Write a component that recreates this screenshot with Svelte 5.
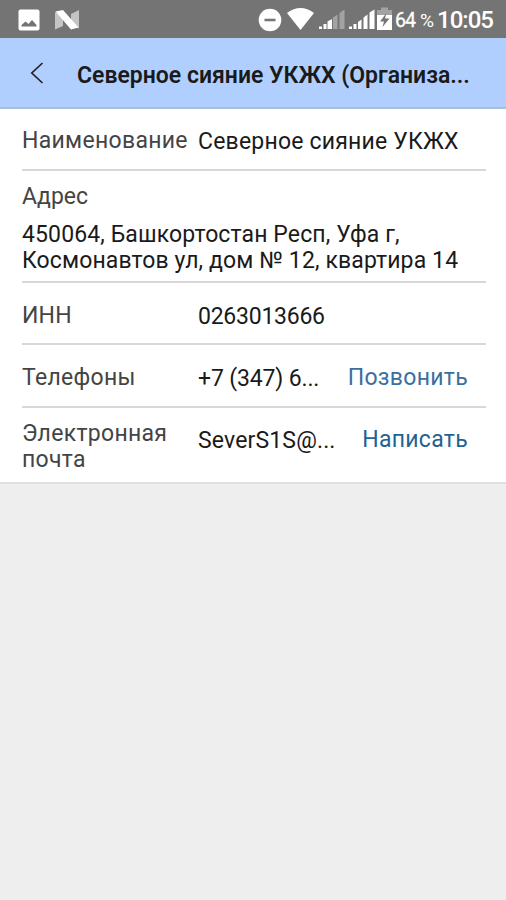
<script lang="ts">
  type Row = {
    kind: string;
    label: string;
    value: string;
    action?: string;
  };

  let title = 'Северное сияние УКЖХ (Организа...';

  let rows: Row[] = [
    { kind: 'name', label: 'Наименование', value: 'Северное сияние УКЖХ' },
    { kind: 'address', label: 'Адрес', value: '450064, Башкортостан Респ, Уфа г,\nКосмонавтов ул, дом № 12, квартира 14' },
    { kind: 'inn', label: 'ИНН', value: '0263013666' },
    { kind: 'phone', label: 'Телефоны', value: '+7 (347) 6...', action: 'Позвонить' },
    { kind: 'email', label: 'Электронная\nпочта', value: 'SeverS1S@...', action: 'Написать' }
  ];
</script>

<div class="screen">
  <div class="status-bar">
    <svg width="506" height="38" viewBox="0 0 506 38" aria-hidden="true">
      <!-- картинка -->
      <rect x="18.5" y="9.5" width="21" height="21" rx="2" fill="#fff" />
      <path d="M21.5 26.5 V25 L25.5 21.5 L28.5 24 L32 20 L36.5 25 V26.5 Z" fill="#747474" />
      <!-- Android N -->
      <path d="M55 12 L63 16 L63 26 L55 29.5 Z M79 10 L71 14 L71 24 L79 28.5 Z" fill="#c4c4c4" />
      <path d="M55.5 11.5 L63 10 L78.5 27.5 L71 29.5 Z" fill="#fff" />
      <!-- не беспокоить -->
      <circle cx="270" cy="20" r="11.3" fill="#fff" />
      <rect x="264.5" y="18.7" width="11" height="2.6" fill="#777" />
      <!-- wi-fi -->
      <path d="M287 13 Q300.5 3 314 13 L300.5 30 Z" fill="#fff" />
      <!-- сигнал SIM 1 -->
      <g fill="#fff">
        <rect x="319" y="26.5" width="3" height="2.5" />
        <rect x="323.5" y="24" width="3" height="5" />
        <path d="M327.5 21.5 L332 19 V29 H327.5 Z" />
      </g>
      <path d="M333 17.5 L337.5 14.5 V29 H333 Z M339.5 13 L344.5 9.5 V29 H339.5 Z" fill="#a3a3a3" />
      <!-- сигнал SIM 2 -->
      <g fill="#fff">
        <rect x="349" y="26.5" width="3" height="2.5" />
        <rect x="353.5" y="24" width="3" height="5" />
        <path d="M358 22 L361.5 19.5 V29 H358 Z M363.5 17.5 L367.5 14.5 V29 H363.5 Z M369.5 12.5 L374.5 9.5 V29 H369.5 Z" />
      </g>
      <!-- батарея -->
      <path d="M377 10 H381 V7.5 H388 V10 H392 V15 H377 Z" fill="#a3a3a3" />
      <path d="M377 15 H392 V30 H377 Z" fill="#fff" />
      <path d="M386.5 13 L380 21.5 H384 L382.5 27 L389.5 18.5 H385 Z" fill="#747474" />
      <text x="395" y="27" class="battery" textLength="21">64</text>
      <text x="420" y="26.500" class="percent" textLength="14" lengthAdjust="spacingAndGlyphs">%</text>
      <text x="437" y="28" class="clock" textLength="57">10:05</text>
    </svg>
  </div>

  <header class="toolbar">
    <button class="back" aria-label="Назад">
      <svg width="14" height="22" viewBox="0 0 14 22">
        <path d="M12.5 1 L1.8 11 L12.5 21" fill="none" stroke="#222" stroke-width="1.7" />
      </svg>
    </button>
    <h1>{title}</h1>
  </header>

  <main class="card">
    {#each rows as row}
      <div class="row {row.kind}">
        <span class="label">{row.label}</span>
        <span class="value">{row.value}</span>
        {#if row.action}
          <button class="action">{row.action}</button>
        {/if}
      </div>
    {/each}
  </main>
</div>

<style>
  :global(body) {
    background: #eee;
  }

  .screen {
    width: 506px;
    height: 900px;
    overflow: hidden;
    background: #eee;
    font-family: Roboto, sans-serif;
    font-size: 23px;
    line-height: 26px;
    color: #1a1a1a;
  }

  .status-bar {
    height: 38px;
    background: #747474;
  }

  .status-bar svg {
    display: block;
  }

  .battery,
  .percent,
  .clock {
    fill: #fff;
  }

  .battery {
    font-size: 19.5px;
    stroke: #fff;
    stroke-width: 0.3px;
  }

  .percent {
    font-size: 18px;
  }

  .clock {
    font-size: 24px;
    font-weight: 500;
  }

  .toolbar {
    display: flex;
    align-items: center;
    box-sizing: border-box;
    height: 71px;
    padding: 2px 30px 0;
    background: #b0cfff;
    border-bottom: 2px solid #a8bedd;
  }

  button {
    padding: 0;
    border: 0;
    background: none;
    font: inherit;
    cursor: pointer;
  }

  .back {
    display: flex;
    width: 47px;
    padding-bottom: 2px;
  }

  h1 {
    margin: 0;
    padding-top: 4px;
    font-size: 23px;
    font-weight: 600;
    white-space: nowrap;
  }

  .card {
    padding: 0 20px 0 22px;
    background: #fff;
    border-bottom: 2px solid #e0e0e0;
  }

  .row {
    display: grid;
    grid-template-columns: 176px 1fr auto;
    align-items: center;
    box-sizing: border-box;
    height: 62px;
    padding: 4px 18px 0 0;
    border-bottom: 2px solid #d8d8d8;
    white-space: pre;
  }

  .label {
    color: #444;
    letter-spacing: 0.3px;
  }

  .value {
    padding-top: 2px;
    letter-spacing: 0.2px;
  }

  .address {
    grid-template-columns: 1fr;
    align-content: start;
    row-gap: 12px;
    height: 112px;
    padding: 13px 0 0;
  }

  .address .label {
    letter-spacing: 0;
  }

  .address .value {
    padding: 0;
    letter-spacing: 0.12px;
  }

  .inn {
    padding-top: 5px;
  }

  .inn .label {
    letter-spacing: 0.2px;
  }

  .inn .value {
    letter-spacing: -0.25px;
  }

  .phone {
    height: 63px;
  }

  .phone .value {
    letter-spacing: -0.15px;
  }

  .email {
    align-items: start;
    height: 74px;
    padding-top: 13px;
    border-bottom: 0;
  }

  .email .value {
    padding-top: 7px;
    letter-spacing: 0.15px;
  }

  .action {
    color: #3a6f9f;
    letter-spacing: 0.3px;
  }

  .email .action {
    padding-top: 6px;
    color: #1f6394;
  }
</style>
